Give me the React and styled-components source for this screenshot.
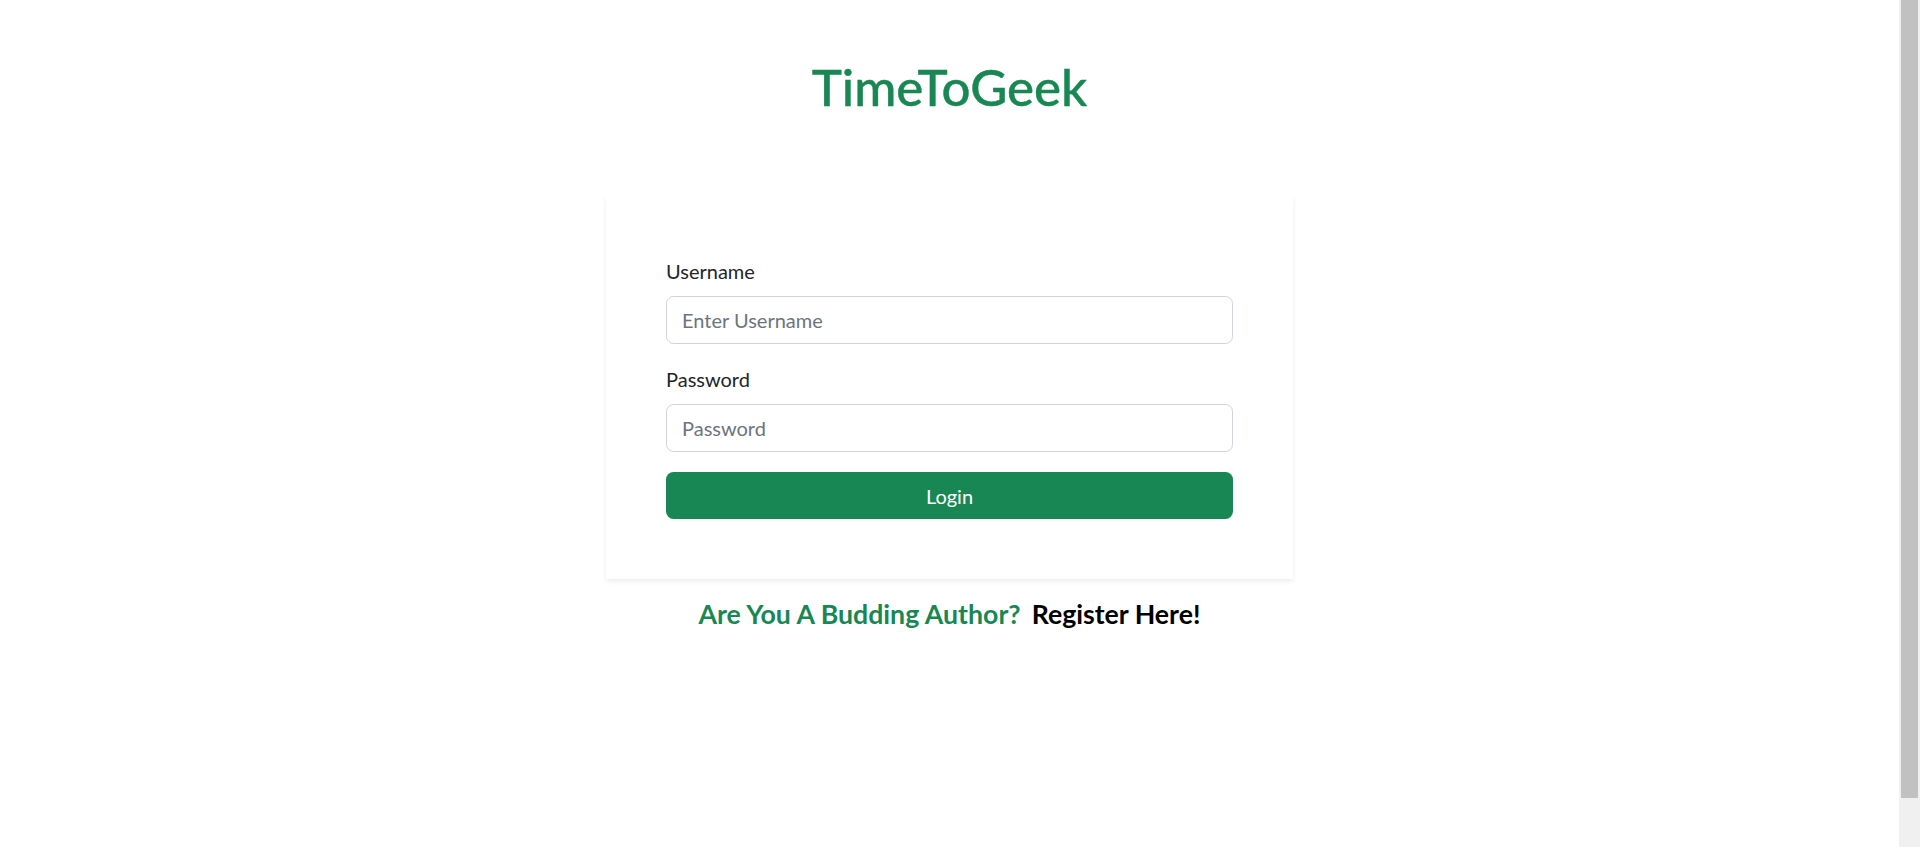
import React from "react";
import styled, { createGlobalStyle } from "styled-components";

const GlobalStyle = createGlobalStyle`
  html, body {
    margin: 0;
    padding: 0;
    background: #ffffff;
  }
  body {
    font-family: Lato, "Open Sans", sans-serif;
    font-size: 20px;
    line-height: 1.5;
    color: #212529;
  }
  * { box-sizing: border-box; }
`;

const Screen = styled.div`
  display: flex;
  height: 847px;
  overflow: hidden;
`;

const Main = styled.main`
  flex: 1;
  display: flex;
  flex-direction: column;
  align-items: center;
`;

const ScrollRail = styled.div`
  width: 21px;
  flex: none;
  padding: 0 2px;
  background: #f0f0f0;
`;

const ScrollThumb = styled.div`
  height: 798px;
  background: #c1c1c1;
`;

const Brand = styled.h1`
  margin: 57px 0 0;
  font-size: 51px;
  line-height: 60px;
  font-weight: 500;
  color: #198754;
  -webkit-text-stroke: 0.4px #198754;
`;

const Card = styled.form`
  margin-top: 78px;
  width: 687px;
  padding: 61px 60px 60px;
  background: #ffffff;
  box-shadow: 0 2.5px 5px rgba(0, 0, 0, 0.075);
  display: flex;
  flex-direction: column;
`;

const Field = styled.div`
  margin-bottom: 20px;
`;

const Label = styled.label`
  display: block;
  margin-bottom: 10px;
  font-size: 20px;
  line-height: 30px;
  color: #212529;
`;

const Input = styled.input`
  display: block;
  width: 100%;
  height: 48px;
  padding: 0 15px;
  font-family: inherit;
  font-size: 20px;
  color: #212529;
  background: #fff;
  border: 1px solid #ced4da;
  border-radius: 7.5px;
  outline: none;
  &::placeholder {
    color: #6c757d;
  }
`;

const Button = styled.button`
  width: 100%;
  height: 47px;
  border: none;
  border-radius: 7.5px;
  background: #198754;
  color: #ffffff;
  font-family: inherit;
  font-size: 20px;
  cursor: pointer;
`;

const Footer = styled.p`
  margin: 17px 0 0;
  font-size: 26.7px;
  line-height: 36px;
  font-weight: 700;
`;

const Prompt = styled.span`
  color: #198754;
`;

const RegisterLink = styled.a`
  margin-left: 11px;
  color: #000000;
  text-decoration: none;
`;

export default function App() {
  return (
    <>
      <GlobalStyle />
      <Screen>
        <Main>
          <Brand>TimeToGeek</Brand>
          <Card onSubmit={(e) => e.preventDefault()}>
            <Field>
              <Label htmlFor="username">Username</Label>
              <Input id="username" placeholder="Enter Username" />
            </Field>
            <Field>
              <Label htmlFor="password">Password</Label>
              <Input id="password" type="password" placeholder="Password" />
            </Field>
            <Button type="submit">Login</Button>
          </Card>
          <Footer>
            <Prompt>Are You A Budding Author?</Prompt>
            <RegisterLink href="#">Register Here!</RegisterLink>
          </Footer>
        </Main>
        <ScrollRail aria-hidden="true">
          <ScrollThumb />
        </ScrollRail>
      </Screen>
    </>
  );
}
